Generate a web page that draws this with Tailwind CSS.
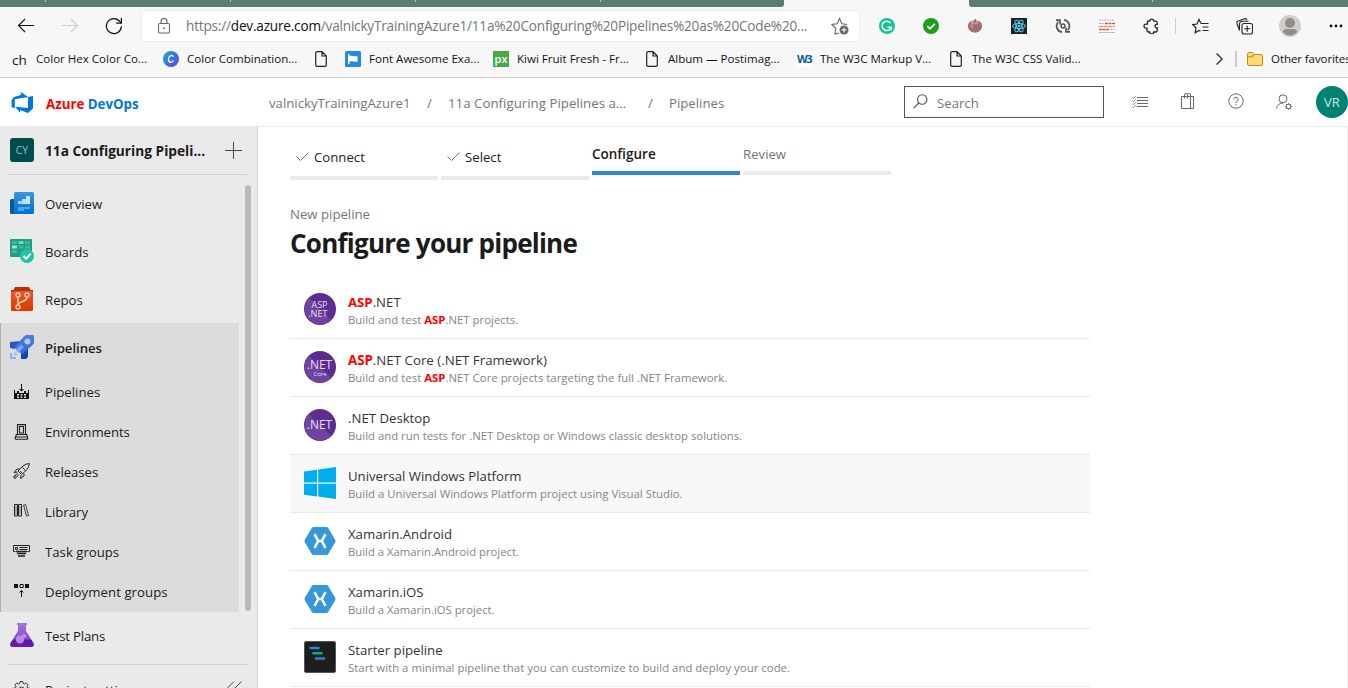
<!DOCTYPE html>
<html lang="en">
<head>
<meta charset="utf-8">
<title>Configure your pipeline</title>
<script src="https://cdn.jsdelivr.net/npm/@tailwindcss/browser@4"></script>
</head>
<body class="w-[1348px] h-[688px] overflow-hidden bg-white font-['Open_Sans','Noto_Sans',sans-serif] text-[13.2px] leading-5 text-[#1b1b1b] whitespace-nowrap">
<div class="flex h-full flex-col">

<!-- tab strip -->
<div class="flex h-[7px] shrink-0 justify-between bg-[#f7f7f7]">
  <div class="flex w-[784px] rounded-br-[3px] bg-[#587d73] pl-[45px]">
    <i class="mr-[184px] h-[2px] w-px bg-[#b5c6c1]"></i><i class="mr-[184px] h-[2px] w-px bg-[#b5c6c1]"></i><i class="mr-[184px] h-[2px] w-px bg-[#b5c6c1]"></i><i class="h-[2px] w-px bg-[#b5c6c1]"></i>
  </div>
  <div class="w-[379px] rounded-bl-[3px] bg-[#587d73] pl-[183px]"><div class="h-[2px] w-px bg-[#b5c6c1]"></div></div>
</div>

<!-- browser toolbar -->
<div class="flex h-[38px] shrink-0 items-center bg-[#f7f7f7] text-[#111]">
  <svg class="ml-[17px] w-[18px] h-[18px] shrink-0" viewBox="0 0 18 18" fill="none" stroke="#111" stroke-width="1.1"><path d="M17 8.500H1.500M8 2L1.500 8.500 8 15"/></svg>
  <svg class="ml-[26px] w-[18px] h-[18px] shrink-0" viewBox="0 0 18 18" fill="none" stroke="#ccc" stroke-width="1.1"><path d="M1 8.500h15.500M10 2l6.500 6.500L10 15"/></svg>
  <svg class="ml-[26px] w-[18px] h-[18px] shrink-0" viewBox="0 0 18 18" fill="none" stroke="#111" stroke-width="1.2"><path d="M16.400 9.200A7.500 7.500 0 1 1 14.800 4.400L16.300 6"/><path d="M16.400 1v5.200h-5.200"/></svg>
  <div class="ml-[19px] flex h-[30px] w-[717px] shrink-0 items-center rounded bg-white pl-[15px] shadow-[0_0_2px_rgba(0,0,0,0.12)]">
    <svg class="w-[14px] h-4 shrink-0" viewBox="0 0 14 16" fill="none" stroke="#666" stroke-width="1.1"><rect x="1.5" y="5.5" width="11" height="9.5" rx="1.5"/><path d="M4 5.500V3.500a3 3 0 0 1 6 0v2"/><circle cx="7" cy="10.200" r=".9" fill="#666" stroke="none"/></svg>
    <div class="ml-[15px] w-[645px] text-[13.6px] tracking-[-0.2px] text-[#767676]">https://<span class="text-[#111]">dev.azure.com</span>/valnickyTrainingAzure1/11a%20Configuring%20Pipelines%20as%20Code%20...</div>
    <svg class="w-[18px] h-[18px] shrink-0" viewBox="0 0 18 18" fill="none" stroke="#666" stroke-width="1.1"><path d="M8 16l-4 1 .8-5.500L1 7.500l5.200-.8L8.500 1.500l2.400 5.200 5.200.8"/><circle cx="13" cy="13" r="4.500" fill="#666" stroke="none"/><path d="M13 10.500v5M10.500 13h5" stroke="#fff"/></svg>
  </div>
  <svg class="ml-5 w-4 h-4 shrink-0" viewBox="0 0 16 16" fill="none"><circle cx="8" cy="8" r="8" fill="#15c39a"/><path d="M11.500 5A4.700 4.700 0 1 0 12.300 9.200H8.500M12.300 9v2.800" stroke="#fff" stroke-width="1.500"/></svg>
  <svg class="ml-7 w-4 h-4 shrink-0" viewBox="0 0 16 16" fill="none"><circle cx="8" cy="8" r="8" fill="#1f9d1f"/><path d="M4.300 8.200l2.700 2.600 4.800-5" stroke="#fff" stroke-width="1.700"/></svg>
  <svg class="ml-7 w-4 h-4 shrink-0" viewBox="0 0 16 16"><path d="M1 8c0-4 3-5.500 7-5.500S15 4 15 8s-3 6.500-7 6.500S1 12 1 8z" fill="#a56e6e"/><ellipse cx="7.500" cy="4.500" rx="4" ry="1.700" fill="#c79c98"/><path d="M7.500 5L8.500 1" stroke="#5d4a45"/><ellipse cx="5" cy="8" rx="1.500" ry="2.500" fill="#bd8c8a"/></svg>
  <svg class="ml-7 w-4 h-4 shrink-0" viewBox="0 0 16 16"><rect width="16" height="16" fill="#1d2128"/><g fill="none" stroke="#5ccfee"><ellipse cx="8" cy="8" rx="6.500" ry="2.500"/><ellipse cx="8" cy="8" rx="6.500" ry="2.500" transform="rotate(60 8 8)"/><ellipse cx="8" cy="8" rx="6.500" ry="2.500" transform="rotate(120 8 8)"/></g><circle cx="8" cy="8" r="1.300" fill="#5ccfee"/></svg>
  <svg class="ml-7 w-4 h-4 shrink-0" viewBox="0 0 16 16" fill="none" stroke="#555" stroke-width="1.700"><path d="M7 14.200A6.300 6.300 0 0 1 3.200 3.800M1 2.200h4v4.300M9 1.800a6.300 6.300 0 0 1 3.800 10.400M15 13.800h-4V9.500"/><circle cx="8" cy="8" r="1.900" stroke-width="1.500"/></svg>
  <svg class="ml-7 w-4 h-4 shrink-0" viewBox="0 0 16 16" fill="none"><rect width="16" height="16" fill="#fff"/><path d="M0 2h15M0 14.500h16" stroke="#aaa" stroke-dasharray="2 .6"/><path d="M6 5.500h10M0 11.500h10" stroke="#e7503e" stroke-width="1.400" stroke-dasharray="3 .5"/><path d="M0 8.500h16" stroke="#ef8d80" stroke-width="1.300" stroke-dasharray="4 .6"/><path d="M0 5.500h5M11 11.500h5" stroke="#aaa" stroke-dasharray="2 .6"/></svg>
  <svg class="ml-7 w-4 h-4 shrink-0" viewBox="0 0 16 16" fill="none" stroke="#222" stroke-width="1.300"><path d="M4.500 3.200h2.200a2 2 0 0 1 4 0h2A1.500 1.500 0 0 1 14.200 4.700v1.600a1.800 1.800 0 1 0 0 3.500v2.700a1.500 1.500 0 0 1-1.500 1.500h-2a2 2 0 0 1-4 0H5.500A1.500 1.500 0 0 1 4 12.500v-2.300H3a2 2 0 0 1 0-4h1.500z"/></svg>
  <div class="ml-4 h-4 w-px bg-[#d0d0d0]"></div>
  <svg class="ml-4 w-[17px] h-4 shrink-0" viewBox="0 0 17 16" fill="none" stroke="#222" stroke-width="1.200"><path d="M9 5.500L7 1.500 5 6 .8 6.600 4 9.800l-.8 5 3.800-2.300 1.500.8M9 5.500h7.500M10.500 9h6M10.500 12.500h6"/></svg>
  <svg class="ml-[27px] w-[17px] h-[17px] shrink-0" viewBox="0 0 17 17" fill="none" stroke="#222" stroke-width="1.100"><path d="M3.500 12.500L1 5.500A2 2 0 0 1 2.200 3L8.500.8A2 2 0 0 1 11 2M3.500 12.500V6A2.800 2.800 0 0 1 6.300 3.200H12.500"/><rect x="6" y="5.500" width="10.500" height="10.500" rx="2"/><path d="M11.200 7.800v6M8.200 10.800h6"/></svg>
  <svg class="ml-[26px] w-[22px] h-[22px] shrink-0" viewBox="0 0 22 22"><circle cx="11" cy="11" r="11" fill="#d0cecb"/><circle cx="11" cy="8" r="5" fill="#918d88"/><path d="M3.800 16.500Q4.500 14 7 14h8q2.500 0 3.200 2.500A9 9 0 0 1 11 20.500a9 9 0 0 1-7.200-4z" fill="#918d88"/></svg>
  <svg class="ml-7 w-[14px] h-1 shrink-0" viewBox="0 0 14 4" fill="#111"><circle cx="2" cy="2" r="1.400"/><circle cx="7" cy="2" r="1.400"/><circle cx="12" cy="2" r="1.400"/></svg>
</div>

<!-- favourites bar -->
<div class="flex h-[33px] shrink-0 items-center border-b border-[#d0d0d0] bg-[#f7f7f7] pb-1 text-[11.550px] text-[#111]">
  <div class="ml-[12px] w-6 shrink-0 pt-[2px] text-[13.500px]">ch</div>
  <div class="w-[127px] shrink-0">Color Hex Color Co...</div>
  <svg class="w-4 h-4 shrink-0" viewBox="0 0 16 16"><defs><linearGradient id="cv" x1="0" y1="0" x2="1" y2="1"><stop offset="0" stop-color="#13b3c8"/><stop offset=".55" stop-color="#3f6fdc"/><stop offset="1" stop-color="#7a35df"/></linearGradient></defs><circle cx="8" cy="8" r="8" fill="url(#cv)"/><path d="M10.300 5.900C9.800 3.500 6 4 5.500 8c-.3 4 3.300 4.200 5 1.500" fill="none" stroke="#fff" stroke-width="1.300"/></svg>
  <div class="ml-2 w-[128px] shrink-0">Color Combination...</div>
  <svg class="w-3 h-4 shrink-0" viewBox="0 0 12 16" fill="none" stroke="#222" stroke-width="1.200"><path d="M.7 2A1.300 1.300 0 0 1 2 .7h5L11.300 5v9a1.300 1.300 0 0 1-1.300 1.300H2A1.300 1.300 0 0 1 .7 14zM7 .7V5h4.300"/></svg>
  <svg class="ml-[18px] w-4 h-4 shrink-0" viewBox="0 0 16 16"><rect width="16" height="16" rx="1.500" fill="#228ae6"/><path d="M3 3h1.500v10H3zM4.500 5c3-1 4 1.200 8 0v5.500c-4 1.200-5-1-8 0z" fill="#fff"/></svg>
  <div class="ml-2 w-[124px] shrink-0">Font Awesome Exa...</div>
  <div class="flex h-4 w-4 shrink-0 items-center justify-center bg-[#48a947] pb-px text-[11px] font-semibold text-white">px</div>
  <div class="ml-2 w-[129px] shrink-0">Kiwi Fruit Fresh - Fr...</div>
  <svg class="w-3 h-4 shrink-0" viewBox="0 0 12 16" fill="none" stroke="#222" stroke-width="1.200"><path d="M.7 2A1.300 1.300 0 0 1 2 .7h5L11.300 5v9a1.300 1.300 0 0 1-1.300 1.300H2A1.300 1.300 0 0 1 .7 14zM7 .7V5h4.300"/></svg>
  <div class="ml-[10px] w-[128px] shrink-0">Album — Postimag...</div>
  <div class="flex h-4 w-4 shrink-0 items-center justify-center bg-white text-[11px] font-bold tracking-[-1.500px] text-[#005a9c]">W3</div>
  <div class="ml-2 w-[130px] shrink-0">The W3C Markup V...</div>
  <svg class="w-3 h-4 shrink-0" viewBox="0 0 12 16" fill="none" stroke="#222" stroke-width="1.200"><path d="M.7 2A1.300 1.300 0 0 1 2 .7h5L11.300 5v9a1.300 1.300 0 0 1-1.300 1.300H2A1.300 1.300 0 0 1 .7 14zM7 .7V5h4.300"/></svg>
  <div class="ml-[10px] w-[244px] shrink-0">The W3C CSS Valid...</div>
  <svg class="w-[7px] h-3 shrink-0" viewBox="0 0 7 12" fill="none" stroke="#222" stroke-width="1.200"><path d="M.6.5L6.200 6 .6 11.500"/></svg>
  <div class="ml-[12px] h-4 w-[2px] shrink-0 bg-[#ccc]"></div>
  <svg class="ml-[10px] w-4 h-[14px] shrink-0" viewBox="0 0 16 14"><path d="M.5 2A1.500 1.500 0 0 1 2 .5h3.500l1.500 2h7A1.500 1.500 0 0 1 15.500 4v8a1.500 1.500 0 0 1-1.500 1.500H2A1.500 1.500 0 0 1 .5 12z" fill="#ffd971" stroke="#c39216"/><path d="M.5 4.800h5L7 2.500" fill="#f1b92c" stroke="#c39216"/></svg>
  <div class="ml-2 shrink-0 tracking-[-0.1px]">Other favorites</div>
</div>

<!-- Azure DevOps header -->
<header class="flex h-[49px] shrink-0 items-center border-b border-[#eaeaea] bg-white text-[#767676]">
  <svg class="ml-[11px] w-[22px] h-[21px] shrink-0" viewBox="0 0 22 21" fill="#0078d7"><path d="M22 4v12.500l-5 4.500-8-3v2.800l-4.800-6L17 16V5zM17.200 4.900L9.800 0v3L3 5 .6 8v7l3.200 1.400V7.200z"/></svg>
  <div class="ml-[13px] w-[223px] shrink-0 pt-[3px] font-bold text-[13.300px]"><span class="text-[#f00]">Azure</span> <span class="text-[#0078d7]">DevOps</span></div>
  <div class="w-[158px] shrink-0 pt-[2px]">valnickyTrainingAzure1</div>
  <div class="w-[21px] shrink-0 pt-[2px]">/</div>
  <div class="w-[200px] shrink-0 pt-[2px] text-[13.300px]">11a Configuring Pipelines a...</div>
  <div class="w-[21px] shrink-0 pt-[2px]">/</div>
  <div class="w-[235px] shrink-0 pt-[2px]">Pipelines</div>
  <div class="-mt-px flex h-8 w-[200px] shrink-0 items-center border border-[#555] pl-2">
    <svg class="w-[15px] h-[15px] shrink-0" viewBox="0 0 15 15" fill="none" stroke="#555" stroke-width="1.100"><circle cx="9.200" cy="5.500" r="4.700"/><path d="M5.900 9L.5 14.400"/></svg>
    <div class="ml-[9px] pt-[2px]">Search</div>
  </div>
  <svg class="ml-7 w-4 h-4 shrink-0" viewBox="0 0 16 16" fill="none" stroke="#666"><path d="M5 3.500h11M5 6.500h11M5 9.500h11M5 12.500h11"/><path d="M.5 3.500l1 1 2-2.200M.5 6.500l1 1 2-2.200M.5 9.500l1 1 2-2.200M.5 12.500l1 1 2-2.200" stroke-width=".8"/></svg>
  <svg class="ml-[33px] -mt-[2px] w-[13px] h-4 shrink-0" viewBox="0 0 13 16" fill="none" stroke="#666"><path d="M.5 3.500h9v12h-9zM9.500 3.500h3v12h-3M3.500 5.500V2a1.500 1.500 0 0 1 3 0v3.500M6.500 1.500A1.500 1.500 0 0 1 9.500 2v1.500"/></svg>
  <svg class="ml-[34px] -mt-[2px] w-4 h-4 shrink-0" viewBox="0 0 16 16" fill="none" stroke="#666"><circle cx="8" cy="8" r="7.200"/><path d="M5.900 6.300a2.100 2.100 0 1 1 3.200 1.800Q8 8.800 8 10M8 11v1.300"/></svg>
  <svg class="ml-8 w-4 h-[17px] shrink-0" viewBox="0 0 16 17" fill="none" stroke="#666"><circle cx="7" cy="4.800" r="4"/><path d="M.6 14.500Q1 9.500 7 9"/><circle cx="12.500" cy="12.500" r="2.200"/><path d="M12.500 9v1.300M12.500 14.700V16M9 12.500h1.300M14.700 12.500H16M10 10l1 1M14 14l1 1M15 10l-1 1M10 15l1-1" stroke-width="1"/></svg>
  <div class="ml-6 -mt-px flex h-8 w-8 shrink-0 items-center justify-center rounded-full bg-[#008272] text-[13px] text-[#cfe8e4]">VR</div>
</header>

<div class="flex min-h-0 flex-1">

<!-- sidebar -->
<aside class="flex w-[258px] shrink-0 flex-col overflow-hidden border-r border-[#cfcfcf] bg-[#eaeaea]">
  <div class="ml-2 flex h-12 w-[239px] shrink-0 items-center border-b border-[#cfcfcf] pb-px pl-[2px]">
    <div class="-mt-px flex h-6 w-6 shrink-0 items-center justify-center rounded-[3px] bg-[#004b50] text-[10.500px] text-[#9fc0c2]">CY</div>
    <div class="ml-[11px] mt-px w-[180px] shrink-0 text-[13.700px] font-bold">11a Configuring Pipeli...</div>
    <svg class="w-[17px] h-[17px] shrink-0" viewBox="0 0 17 17" stroke="#444"><path d="M8.500 0v17M0 8.500h17"/></svg>
  </div>
  <div class="flex h-[489px] shrink-0 pt-[5px]">
    <nav class="w-[239px] shrink-0">
      <a class="flex h-12 items-center pl-[10px]">
        <svg class="-mt-[2px] w-6 h-[22px] shrink-0" viewBox="0 0 24 22"><defs><linearGradient id="ov" x1="0" y1="0" x2="0" y2="1"><stop offset="0" stop-color="#3a96e0"/><stop offset="1" stop-color="#0070d2"/></linearGradient></defs><rect y="7" width="8" height="15" rx="1.500" fill="#005ba1"/><rect x="4" width="20" height="22" rx="1.500" fill="url(#ov)"/><path d="M8 9h4v3H8z" fill="#a6d3f5"/><path d="M12 7h4v5h-4z" fill="#b9defa"/><path d="M16 4h4v8h-4z" fill="#c9e6fc"/><path d="M8 15h12v2h-6v2H8z" fill="#4fa3ea"/></svg>
        <span class="ml-[11px]">Overview</span></a>
      <a class="flex h-12 items-center pl-[10px]">
        <svg class="-mt-[2px] w-6 h-6 shrink-0" viewBox="0 0 24 24"><rect width="22" height="18" rx="1" fill="#269a82"/><path d="M2 2h5v3H2zM15 2h5v3h-5zM8.500 6.500h5v3h-5zM15 6.500h5v3h-5zM2 11h5v3H2z" fill="#36bb9e"/><path d="M8.500 2h5v3h-5z" fill="#5fe0c3"/><path d="M2 6.500h5v3H2z" fill="#8af3dc"/><circle cx="17" cy="17" r="7" fill="#1bc6a8"/><path d="M13.500 17l2.700 2.700 4.500-5" fill="none" stroke="#fff" stroke-width="2"/></svg>
        <span class="ml-[11px]">Boards</span></a>
      <a class="flex h-12 items-center pl-[10px]">
        <svg class="-mt-[2px] w-6 h-6 shrink-0" viewBox="0 0 24 24"><defs><linearGradient id="rp" x1="0" y1="0" x2="0" y2="1"><stop offset="0" stop-color="#e8582a"/><stop offset="1" stop-color="#d83b01"/></linearGradient></defs><path d="M5 0h14l1.500 3H23v2H1V3h2.500z" fill="#b72f02"/><rect x="1" y="4" width="22" height="20" rx="1.500" fill="url(#rp)"/><g fill="none" stroke="#ffc9b2" stroke-width="1.500"><circle cx="8" cy="8" r="2"/><circle cx="17" cy="8" r="2"/><circle cx="8" cy="20" r="2"/><path d="M8 10v8M17 10q0 3-3.500 4T8 17.500"/></g></svg>
        <span class="ml-[11px]">Repos</span></a>
      <div class="-mt-px border-l border-[#b0b0b0] bg-[#dcdcdc] pt-px">
        <a class="flex h-12 items-center pl-[9px] font-semibold">
          <svg class="-mt-[2px] w-6 h-6 shrink-0" viewBox="0 0 24 24"><defs><linearGradient id="pl" x1="0" y1="0" x2="0" y2="1"><stop offset="0" stop-color="#4a7fe4"/><stop offset="1" stop-color="#3466dd"/></linearGradient></defs><path d="M0 7l12-1L5 14l-5-1z" fill="#2258c4"/><path d="M18 10v12l-2 2h-5V18z" fill="#1246b4"/><path d="M14 1.500L16 0h7l1 1v7l-1.500 2L12 19.500 4.500 12z" fill="url(#pl)"/><circle cx="17.500" cy="6.500" r="3" fill="#b3cbf8"/><path d="M5.500 14.500L11 9.500l3 2.500-5.500 6z" fill="#7ea6f4"/><path d="M0 18h2v4h4v2H0z" fill="#86aef5"/><path d="M4 16l4 4-4 1z" fill="#a6c2f8"/></svg>
          <span class="ml-[11px] text-[13.200px] tracking-[-0.050px]">Pipelines</span></a>
        <a class="flex h-10 items-center pl-[13px]">
          <svg class="-mt-[2px] w-[15px] h-[15px] shrink-0" viewBox="0 0 15 15" fill="#111"><path d="M7 0h1v5h2L7.500 7.500 5 5h2zM0 6h1v3h2V7h2v2h5V7h2v2h2V6h1v9H0z"/><path d="M3 10h2v1.500H3zM6.500 10h2v1.500h-2zM10 10h2v1.500h-2zM3 12.500h2V14H3zM6.500 12.500h2V14h-2zM10 12.500h2V14h-2z" fill="#dcdcdc"/></svg>
          <span class="ml-4">Pipelines</span></a>
        <a class="flex h-10 items-center pl-[13px]">
          <svg class="-mt-[1px] w-[15px] h-[16px] shrink-0" viewBox="0 0 15 16" fill="none" stroke="#222" stroke-width="1.100"><path d="M3.500 10.500V.6h8v9.900M5.500 2.500h4v6.500h-4zM1 15.300h13M2.500 10L1 15M12.500 10L14 15M2.500 10.500h10M1.500 13h12"/></svg>
          <span class="ml-4 tracking-[-0.050px]">Environments</span></a>
        <a class="flex h-10 items-center pl-[12px]">
          <svg class="-mt-[2px] w-[17px] h-4 shrink-0" viewBox="0 0 17 16" fill="none" stroke="#222"><path d="M16.400.6Q11 .5 5 8l3.500 3.500Q15.500 6.500 16.400.6zM6.500 6H4L1 9.500l3.500-.5M11 10.500V13l-3.500 2.500.5-3.500M9.500 4.500l3 3M7 8l2 2"/><circle cx="2" cy="14" r="1.300"/><path d="M2.500 12Q3 10.500 4.500 11t0 2.500"/></svg>
          <span class="ml-[15px] tracking-[-0.050px]">Releases</span></a>
        <a class="flex h-10 items-center pl-[13px]">
          <svg class="-mt-[3px] w-[15px] h-[13px] shrink-0" viewBox="0 0 15 13" fill="none" stroke="#222"><path d="M.5.500h3v11.500h-3zM4.500.500h3v11.500h-3z"/><path d="M2 2v8.500M6 2v8.500" stroke="#777"/><path d="M9.500 1l2-.5 3 11-2 .5z" stroke="#444"/></svg>
          <span class="ml-4">Library</span></a>
        <a class="flex h-10 items-center pl-[12px]">
          <svg class="-mt-[3px] w-[17px] h-3 shrink-0" viewBox="0 0 17 12" fill="none" stroke="#222"><path d="M2.500 6.500H.5v-6h16v6h-2M2.500 2.500h2v2h-2zM6.500 2.500h8M6.500 4.500h8" /><path d="M3 6.500h11M4 8.500h9M5 11h7" stroke-width="1.300"/></svg>
          <span class="ml-[15px]">Task groups</span></a>
        <a class="flex h-10 items-center pl-[13px]">
          <svg class="-mt-[4px] w-[15px] h-[13px] shrink-0" viewBox="0 0 15 13" fill="#111"><path d="M0 0h4v4H0zM11 0h4v4h-4z"/><path d="M6 .5h3.200v3H6zM7.500 13V7M5.500 8.500l2-2 2 2" fill="none" stroke="#111"/></svg>
          <span class="ml-4 tracking-[0.060px]">Deployment groups</span></a>
      </div>
      <a class="flex h-12 items-center pl-[10px]">
        <svg class="-mt-[2px] w-6 h-6 shrink-0" viewBox="0 0 24 24"><defs><linearGradient id="tp" x1="0" y1="0" x2="0" y2="1"><stop offset="0" stop-color="#a876dd"/><stop offset=".68" stop-color="#8347c5"/><stop offset=".7" stop-color="#5e1aa5"/><stop offset="1" stop-color="#6a1cb4"/></linearGradient></defs><path d="M7 0h10v2h-1v6l7.500 12q1.500 4-2 4h-19Q-1 24 .5 20L8 8V2H7z" fill="url(#tp)"/><circle cx="10" cy="16.500" r="4" fill="#b78ce6"/><circle cx="14" cy="13" r="2.300" fill="#b78ce6"/></svg>
        <span class="ml-[11px] tracking-[-0.200px]">Test Plans</span></a>
    </nav>
    <div class="ml-[6px] mt-[5px] h-[426px] w-[6px] rounded-full bg-[#bababa]"></div>
  </div>
  <div class="ml-2 flex h-[50px] w-[239px] shrink-0 items-center border-t border-[#cfcfcf] pl-[5px]">
    <svg class="w-[17px] h-[17px] shrink-0" viewBox="0 0 17 17" fill="none" stroke="#333"><path d="M7.200.5h2.600l.4 2 1.300.6 1.700-1.200 1.900 1.900-1.200 1.700.6 1.300 2 .4v2.600l-2 .4-.6 1.300 1.200 1.700-1.900 1.900-1.700-1.200-1.300.6-.4 2H7.200l-.4-2-1.300-.6-1.700 1.200-1.900-1.900 1.200-1.700-.6-1.300-2-.4V7.200l2-.4.6-1.300-1.200-1.700 1.900-1.900 1.700 1.200 1.300-.6z"/><circle cx="8.500" cy="8.500" r="2.500"/></svg>
    <span class="ml-[15px] w-[181px] shrink-0">Project settings</span>
    <svg class="w-4 h-[17px] shrink-0" viewBox="0 0 16 17" fill="none" stroke="#444"><path d="M8 .5l-8 8 8 8M15.500 .5l-8 8 8 8"/></svg>
  </div>
</aside>

<!-- main -->
<main class="flex-1 overflow-hidden border-r border-[#eaeaea] pl-8">
  <div class="flex gap-[3px]">
    <div class="flex h-[53px] w-[148px] items-center border-b-4 border-[#eaeaea] pl-[6px] pt-[10px]"><svg class="w-[13px] h-[9px]" viewBox="0 0 13 9" fill="none" stroke="#777"><path d="M.5 4.500l4 4 8-8"/></svg><span class="ml-[5px]">Connect</span></div>
    <div class="flex h-[53px] w-[148px] items-center border-b-4 border-[#eaeaea] pl-[6px] pt-[10px]"><svg class="w-[13px] h-[9px]" viewBox="0 0 13 9" fill="none" stroke="#777"><path d="M.5 4.500l4 4 8-8"/></svg><span class="ml-[5px]">Select</span></div>
    <div class="flex h-12 w-[148px] items-center border-b-4 border-[#2b88d8] pt-[9px] text-[13.500px] font-semibold">Configure</div>
    <div class="flex h-12 w-[148px] items-center border-b-4 border-[#eaeaea] pt-[9px] text-[#767676]">Review</div>
  </div>
  <div class="mt-[24px] h-5 text-[#767676]">New pipeline</div>
  <h1 class="mt-[3px] h-8 text-[26px] font-bold leading-8 tracking-[-0.760px]">Configure your pipeline</h1>
  <div class="mt-[22px] w-[800px] text-[#333]">
    <div class="flex h-[58px] items-center border-b border-[#eaeaea] pl-[14px]">
      <svg class="-mt-[2px] w-8 h-8 shrink-0" viewBox="0 0 32 32"><circle cx="16" cy="16" r="16" fill="#5c2d91"/><path d="M4.700 4.700L27.300 27.300A16 16 0 0 1 4.700 4.700z" fill="#6f439f"/><g fill="#e6dcf0" font-family="Open Sans" font-size="9" text-anchor="middle"><text x="15.500" y="15">ASP</text><text x="13.800" y="24">.NET</text></g></svg>
      <div class="ml-3 mt-[2px]"><div class="h-[18px] leading-[18px]"><b class="text-[#f00]">ASP</b>.NET</div><div class="h-[18px] text-[11.400px] leading-[18px] text-[#858585]">Build and test <b class="text-[#f00]">ASP</b>.NET projects.</div></div>
    </div>
    <div class="flex h-[58px] items-center border-b border-[#eaeaea] pl-[14px]">
      <svg class="-mt-[2px] w-8 h-8 shrink-0" viewBox="0 0 32 32"><circle cx="16" cy="16" r="16" fill="#5c2d91"/><path d="M4.700 4.700L27.300 27.300A16 16 0 0 1 4.700 4.700z" fill="#6f439f"/><g fill="#e6dcf0" font-family="Open Sans" text-anchor="middle"><text x="15.500" y="18.300" font-size="12">.NET</text><text x="16" y="25" font-size="6">Core</text></g></svg>
      <div class="ml-3 mt-[2px]"><div class="h-[18px] text-[13.300px] leading-[18px]"><b class="text-[#f00]">ASP</b>.NET Core (.NET Framework)</div><div class="h-[18px] text-[11.400px] leading-[18px] text-[#858585]">Build and test <b class="text-[#f00]">ASP</b>.NET Core projects targeting the full .NET Framework.</div></div>
    </div>
    <div class="flex h-[58px] items-center border-b border-[#eaeaea] pl-[14px]">
      <svg class="-mt-[2px] w-8 h-8 shrink-0" viewBox="0 0 32 32"><circle cx="16" cy="16" r="16" fill="#5c2d91"/><path d="M4.700 4.700L27.300 27.300A16 16 0 0 1 4.700 4.700z" fill="#6f439f"/><text x="15.500" y="20.300" font-size="12" fill="#e6dcf0" font-family="Open Sans" text-anchor="middle">.NET</text></svg>
      <div class="ml-3 mt-[2px]"><div class="h-[18px] leading-[18px]">.NET Desktop</div><div class="h-[18px] text-[11.360px] leading-[18px] text-[#858585]">Build and run tests for .NET Desktop or Windows classic desktop solutions.</div></div>
    </div>
    <div class="flex h-[58px] items-center border-b border-[#eaeaea] bg-[#f8f8f8] pl-[14px]">
      <svg class="-mt-[2px] w-8 h-8 shrink-0" viewBox="0 0 32 32" fill="#00adef"><path d="M0 4.500l13-1.800V15.500H0zM14.200 2.500L32 0v15.500H14.200zM0 16.700h13v12.800L0 27.700zM14.200 16.700H32V32l-17.800-2.400z"/></svg>
      <div class="ml-3 mt-[2px]"><div class="h-[18px] leading-[18px]">Universal Windows Platform</div><div class="h-[18px] text-[11.380px] leading-[18px] text-[#858585]">Build a Universal Windows Platform project using Visual Studio.</div></div>
    </div>
    <div class="flex h-[58px] items-center border-b border-[#eaeaea] pl-[14px]">
      <svg class="-mt-[2px] w-8 h-8 shrink-0" viewBox="0 0 32 32"><path d="M9.500 2h13q1 0 1.700 1l7 11.700q.6 1.300 0 2.600l-7 11.700q-.7 1-1.700 1h-13q-1 0-1.700-1L.8 17.300q-.6-1.300 0-2.600L7.800 3q.7-1 1.700-1z" fill="#3498db"/><path d="M10.500 9.200L14.200 16l-3.700 6.800M21.500 9.200L17.800 16l3.700 6.800M14 16h4" fill="none" stroke="#fff" stroke-width="2.500"/></svg>
      <div class="ml-3 mt-[2px]"><div class="h-[18px] leading-[18px]">Xamarin.Android</div><div class="h-[18px] text-[11.300px] leading-[18px] text-[#858585]">Build a Xamarin.Android project.</div></div>
    </div>
    <div class="flex h-[58px] items-center border-b border-[#eaeaea] pl-[14px]">
      <svg class="-mt-[2px] w-8 h-8 shrink-0" viewBox="0 0 32 32"><path d="M9.500 2h13q1 0 1.700 1l7 11.700q.6 1.300 0 2.600l-7 11.700q-.7 1-1.700 1h-13q-1 0-1.700-1L.8 17.300q-.6-1.300 0-2.600L7.800 3q.7-1 1.700-1z" fill="#3498db"/><path d="M10.500 9.200L14.200 16l-3.700 6.800M21.500 9.200L17.800 16l3.700 6.800M14 16h4" fill="none" stroke="#fff" stroke-width="2.500"/></svg>
      <div class="ml-3 mt-[2px]"><div class="h-[18px] leading-[18px]">Xamarin.iOS</div><div class="h-[18px] text-[11.300px] leading-[18px] text-[#858585]">Build a Xamarin.iOS project.</div></div>
    </div>
    <div class="flex h-[58px] items-center border-b border-[#eaeaea] pl-[14px]">
      <svg class="-mt-[2px] w-8 h-8 shrink-0" viewBox="0 0 32 32"><rect x=".5" y=".5" width="31" height="31" rx="1.500" fill="#1e1e1e" stroke="#555"/><g stroke-width="2.600" stroke-linecap="round"><path d="M6.500 7h8M12 17.500h8" stroke="#2b88d8"/><path d="M9.500 12.200h8" stroke="#00b294"/></g></svg>
      <div class="ml-3 mt-[2px]"><div class="h-[18px] leading-[18px]">Starter pipeline</div><div class="h-[18px] text-[11.420px] leading-[18px] text-[#858585]">Start with a minimal pipeline that you can customize to build and deploy your code.</div></div>
    </div>
  </div>
</main>
</div>
</div>
</body>
</html>
